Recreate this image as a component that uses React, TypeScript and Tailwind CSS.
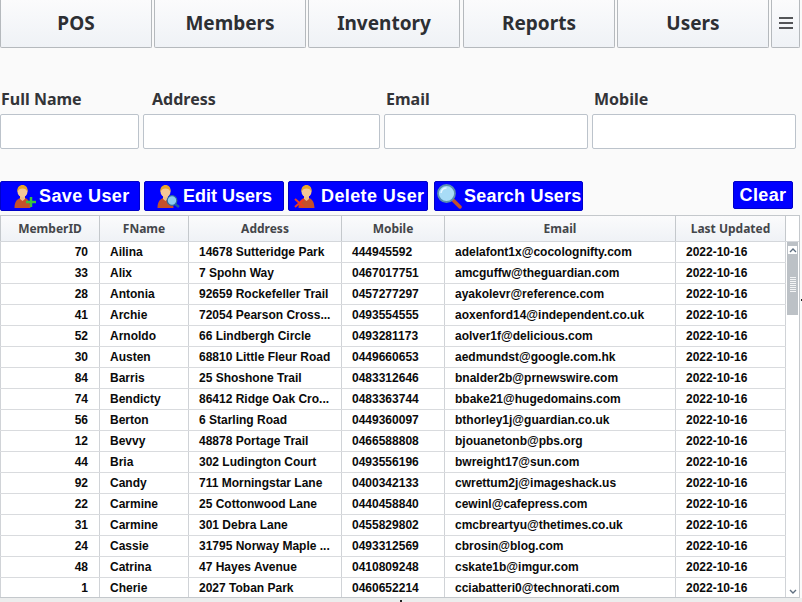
const tabs = [
  { label: 'POS', className: '' },
  { label: 'Members', className: '' },
  { label: 'Inventory', className: '' },
  { label: 'Reports', className: 'ml-[1px]' },
  { label: 'Users', className: '' },
];

const fields = [
  { label: 'Full Name', w: 'w-[139px]', labelClass: 'pl-[1px]' },
  { label: 'Address', w: 'w-[237px]', labelClass: 'pl-[9px]' },
  { label: 'Email', w: 'w-[204px]', labelClass: 'pl-[2px]' },
  { label: 'Mobile', w: 'w-[204px]', labelClass: 'pl-[2px]' },
];

const rows: [number, string, string, string, string][] = [
  [70, 'Ailina', '14678 Sutteridge Park', '444945592', 'adelafont1x@cocolognifty.com'],
  [33, 'Alix', '7 Spohn Way', '0467017751', 'amcguffw@theguardian.com'],
  [28, 'Antonia', '92659 Rockefeller Trail', '0457277297', 'ayakolevr@reference.com'],
  [41, 'Archie', '72054 Pearson Cross...', '0493554555', 'aoxenford14@independent.co.uk'],
  [52, 'Arnoldo', '66 Lindbergh Circle', '0493281173', 'aolver1f@delicious.com'],
  [30, 'Austen', '68810 Little Fleur Road', '0449660653', 'aedmundst@google.com.hk'],
  [84, 'Barris', '25 Shoshone Trail', '0483312646', 'bnalder2b@prnewswire.com'],
  [74, 'Bendicty', '86412 Ridge Oak Cro...', '0483363744', 'bbake21@hugedomains.com'],
  [56, 'Berton', '6 Starling Road', '0449360097', 'bthorley1j@guardian.co.uk'],
  [12, 'Bevvy', '48878 Portage Trail', '0466588808', 'bjouanetonb@pbs.org'],
  [44, 'Bria', '302 Ludington Court', '0493556196', 'bwreight17@sun.com'],
  [92, 'Candy', '711 Morningstar Lane', '0400342133', 'cwrettum2j@imageshack.us'],
  [22, 'Carmine', '25 Cottonwood Lane', '0440458840', 'cewinl@cafepress.com'],
  [31, 'Carmine', '301 Debra Lane', '0455829802', 'cmcbreartyu@thetimes.co.uk'],
  [24, 'Cassie', '31795 Norway Maple ...', '0493312569', 'cbrosin@blog.com'],
  [48, 'Catrina', '47 Hayes Avenue', '0410809248', 'cskate1b@imgur.com'],
  [1, 'Cherie', '2027 Toban Park', '0460652214', 'cciabatteri0@technorati.com'],
];

const columns = [
  { label: 'MemberID', w: 'w-[100px]' },
  { label: 'FName', w: 'w-[89px]' },
  { label: 'Address', w: 'w-[153px]' },
  { label: 'Mobile', w: 'w-[103px]' },
  { label: 'Email', w: 'w-[231px]' },
  { label: 'Last Updated', w: 'w-[110px]' },
];

function UserFigure() {
  return (
    <>
      <path d="M0.500 24c0-5.500 2-8.500 5.500-10h5c3.500 1.500 5 4 5.500 10z" fill="#c4502c" />
      <path d="M6 12h5v3l-2.500 2-2.500-2z" fill="#f0bd8c" />
      <ellipse cx="8.500" cy="7.500" rx="5" ry="5.800" fill="#f5c795" />
      <path d="M3.500 8C2.800 3.500 5.500 1 8.500 1s5.700 2.500 5 7c-1-2.500-2.500-3.500-5-3.500S4.500 5.500 3.500 8z" fill="#e9a42a" />
    </>
  );
}

function SaveIcon() {
  return (
    <svg width="24" height="24" viewBox="0 0 24 24" className="shrink-0">
      <UserFigure />
      <path d="M17 13v10M12 18h10" stroke="#3cc43c" strokeWidth="2.500" />
    </svg>
  );
}

function EditIcon() {
  return (
    <svg width="24" height="24" viewBox="0 0 24 24" className="shrink-0">
      <UserFigure />
      <path d="M18 20l4 3" stroke="#1f5f9f" strokeWidth="2.500" />
      <circle cx="15" cy="16.500" r="4.800" fill="#8ccbf0" stroke="#2f6f9f" strokeWidth="1.200" />
    </svg>
  );
}

function DeleteIcon() {
  return (
    <svg width="24" height="24" viewBox="0 0 24 24" className="shrink-0">
      <g transform="translate(5 0)">
        <UserFigure />
      </g>
      <path d="M2 15l9 8M11 15l-9 8" stroke="#f03a20" strokeWidth="2" />
    </svg>
  );
}

function SearchIcon() {
  return (
    <svg width="26" height="26" viewBox="0 0 26 26" className="shrink-0">
      <path d="M16 16l8 8" stroke="#c2502c" strokeWidth="3.500" strokeLinecap="round" />
      <circle cx="10.500" cy="10.500" r="8.500" fill="#a8dcf6" stroke="#5a8fb0" strokeWidth="1.800" />
      <path d="M5 10c.5-3 2.500-5 5.500-5" stroke="#e6f7ff" strokeWidth="1.500" fill="none" />
    </svg>
  );
}

function ActionButton({ label, className, icon }: { label: string; className: string; icon: React.ReactNode }) {
  return (
    <button className={`h-[30px] flex items-center bg-[#0000ff] border border-[#0000c8] rounded-[2px] text-white text-[18px] font-bold font-['Liberation_Sans',sans-serif] whitespace-nowrap ${className}`}>
      {icon}
      {label}
    </button>
  );
}

export default function App() {
  return (
    <div className="relative w-[802px] h-[602px] overflow-hidden bg-[#fafafa] font-['Noto_Sans',sans-serif]">
      {/* Top navigation */}
      <div className="flex h-[48px] items-stretch gap-[2px]">
        {tabs.map((tab) => (
          <button
            key={tab.label}
            className={`w-[152px] border border-t-0 border-[#b5b9bd] rounded-b-[2px] bg-gradient-to-b from-[#fbfbfc] to-[#eff2f6] text-[19px] font-bold text-[#2d2f33] ${tab.className}`}
          >
            {tab.label}
          </button>
        ))}
        <button className="w-[29px] flex justify-center pt-[16px] border border-t-0 border-[#b5b9bd] rounded-b-[2px] bg-gradient-to-b from-[#fbfbfc] to-[#eff2f6]">
          <svg width="16" height="14" viewBox="0 0 16 14">
            <path d="M1 2h14M1 7h14M1 12h14" stroke="#1f2023" strokeWidth="1.600" />
          </svg>
        </button>
      </div>

      {/* Form fields */}
      <div className="flex gap-[4px] mt-[40px]">
        {fields.map((field) => (
          <div key={field.label} className={field.w}>
            <label className={`block h-[26px] leading-[22px] text-[16px] font-bold text-[#333438] ${field.labelClass}`}>{field.label}</label>
            <input className="block w-full h-[35px] bg-white border border-[#bcc3cb] rounded-[2px]" />
          </div>
        ))}
      </div>

      {/* Actions */}
      <div className="flex mt-[32px] h-[30px]">
        <ActionButton label="Save User" className="w-[140px] pl-[13px] gap-[1px] tracking-[0.4px]" icon={<SaveIcon />} />
        <ActionButton label="Edit Users" className="w-[140px] ml-[4px] pl-[12px] gap-[2px]" icon={<EditIcon />} />
        <ActionButton label="Delete User" className="w-[140px] ml-[4px] pl-[4px] gap-[4px] tracking-[0.4px]" icon={<DeleteIcon />} />
        <ActionButton label="Search Users" className="w-[149px] ml-[6px] pl-[1px] gap-[2px] tracking-[0.2px]" icon={<SearchIcon />} />
        <button className="ml-[150px] w-[60px] h-[28px] bg-[#0000ff] border border-[#0000c8] rounded-[2px] text-white text-[18px] font-bold tracking-[0.4px] font-['Liberation_Sans',sans-serif]">
          Clear
        </button>
      </div>

      {/* Members table */}
      <div className="mt-[4px] w-[800px] h-[383px] border-t border-b border-r border-[#c4c8cc] flex flex-col bg-white">
        <div className="flex h-[26px] shrink-0 border-b border-[#d4d7db]">
          <div className="flex bg-gradient-to-b from-[#fbfbfc] to-[#eff2f6]">
            {columns.map((col) => (
              <div
                key={col.label}
                className={`${col.w} border-r border-[#c4c8cc] first:border-l flex items-center justify-center text-[12px] font-bold text-[#44464a]`}
              >
                {col.label}
              </div>
            ))}
          </div>
          <div className="flex-1 bg-white" />
        </div>
        <div className="flex flex-1 min-h-0">
          <div className="flex flex-col w-[786px] overflow-hidden font-['Liberation_Sans',sans-serif] text-[12px] font-bold text-[#0a0a0a]">
            {rows.map((row) => (
              <div key={`${row[0]}-${row[1]}`} className="flex h-[21px] shrink-0 border-b border-[#d9dbde]">
                <div className="w-[100px] shrink-0 border-l border-r border-[#d0d3d7] pr-[11px] text-right leading-[20px]">{row[0]}</div>
                <div className="w-[89px] shrink-0 border-r border-[#d0d3d7] pl-[10px] leading-[20px]">{row[1]}</div>
                <div className="w-[153px] shrink-0 border-r border-[#d0d3d7] pl-[10px] leading-[20px] whitespace-nowrap">{row[2]}</div>
                <div className="w-[103px] shrink-0 border-r border-[#d0d3d7] pl-[10px] leading-[20px]">{row[3]}</div>
                <div className="w-[231px] shrink-0 border-r border-[#d0d3d7] pl-[10px] leading-[20px] whitespace-nowrap">{row[4]}</div>
                <div className="w-[110px] shrink-0 border-r border-[#d0d3d7] pl-[10px] leading-[20px]">2022-10-16</div>
              </div>
            ))}
          </div>
          {/* Scrollbar */}
          <div className="flex-1 px-[1px] flex flex-col bg-white">
            <div className="h-[73px] bg-[#bcc1c6] flex flex-col items-center px-[1px] pt-[4px]">
              <div className="h-[8px] w-full bg-white flex items-center justify-center">
                <svg width="8" height="5" viewBox="0 0 8 5"><path d="M1 4l3-3 3 3" stroke="#5f6f80" strokeWidth="1.400" fill="none" /></svg>
              </div>
              <div className="flex-1 flex flex-col items-center justify-center gap-[1px]">
                {Array.from({ length: 8 }).map((_, i) => (
                  <div key={i} className="w-[6px] h-[1px] bg-[#f4f5f6]" />
                ))}
              </div>
            </div>
            <div className="flex-1" />
            <div className="h-[12px] flex items-center justify-center">
              <svg width="8" height="5" viewBox="0 0 8 5"><path d="M1 1l3 3 3-3" stroke="#5f6f80" strokeWidth="1.400" fill="none" /></svg>
            </div>
          </div>
        </div>
      </div>
      <div className="h-[4px] bg-[#eceded]" />

      {/* Small handle marks on the window edge */}
      <div className="absolute left-[400px] top-[600px] w-[2px] h-[2px] bg-[#222222]" />
      <div className="absolute left-[801px] top-[299px] w-[1px] h-[2px] bg-[#222222]" />
    </div>
  );
}
